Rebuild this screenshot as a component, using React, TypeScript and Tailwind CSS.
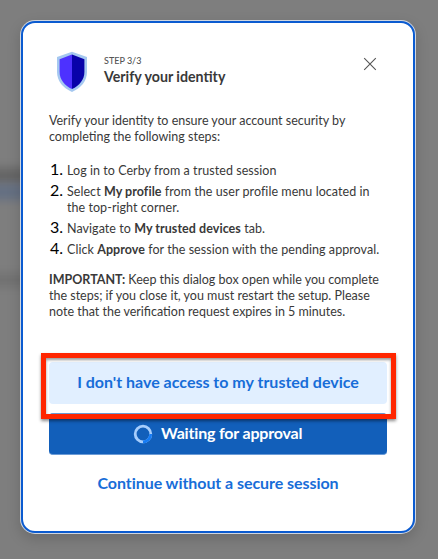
import type { ReactNode } from "react";

function Line({ className = "", children }: { className?: string; children: ReactNode }) {
  return <span className={`block w-max whitespace-nowrap ${className}`}>{children}</span>;
}

function Step({ n, children }: { n: number; children: ReactNode }) {
  return (
    <li className="flex">
      <span className="-mt-0.5 w-[14px] shrink-0 text-right text-[16px] text-black">{n}.</span>
      <div className="ml-1 tracking-[0.055px]">{children}</div>
    </li>
  );
}

function Shield() {
  return (
    <svg width="32" height="42" viewBox="0 0 32 42" className="shrink-0" aria-hidden="true">
      <path d="M16 .8 31 6v15c0 9-6 16-15 20C7 37 1 30 1 21V6Z" fill="#a5c8f0" />
      <path d="M16 3.4 3.6 8.2V21c0 7.7 5 13.6 12.4 17.1Z" fill="#4d31ff" />
      <path d="M16 3.4 28.4 8.2V21c0 7.7-5 13.6-12.4 17.1Z" fill="#0802a9" />
    </svg>
  );
}

function Spinner() {
  return (
    <svg width="20" height="20" viewBox="0 0 20 20" aria-hidden="true">
      <circle cx="10" cy="10" r="7.8" fill="none" stroke="#a6cdfc" strokeWidth="2.8" />
      <path d="M17.8 10A7.8 7.8 0 0 1 10 17.8" fill="none" stroke="#167cf5" strokeWidth="2.8" />
    </svg>
  );
}

export default function App() {
  return (
    <main className="relative flex h-[559px] w-[438px] overflow-hidden bg-[#7e7e7e] pt-5 pl-5 font-['Lato','Liberation_Sans',sans-serif] text-[#393939]">
      <div className="absolute top-[168px] -left-6 h-4 w-16 bg-[#656565] blur-[5px]" />
      <div className="absolute top-[184px] -left-6 h-4 w-16 bg-[#646f83] blur-[5px]" />
      <div className="absolute top-[274px] -left-6 h-3 w-16 bg-[#707070] blur-[5px]" />
      <section className="relative h-[514px] w-[396px] rounded-[15px] bg-[#d0d6df] p-px shadow-[0_5px_14px_rgba(0,0,0,0.16)]">
        <div className="h-full w-full rounded-[14px] border-2 border-[#0b5bd0] bg-white px-[26px] pt-7">
          <header className="flex h-[42px] items-start pl-[7px]">
            <Shield />
            <div className="ml-4 pt-1">
              <Line className="text-[9px] leading-[12px] font-medium text-[#555]">STEP 3/3</Line>
              <Line className="text-[14.2px] leading-[19px] font-bold">Verify your identity</Line>
            </div>
            <svg width="14" height="14" viewBox="0 0 14 14" className="mt-[6px] mr-[10px] ml-auto" aria-label="Close">
              <path d="m1.2 1.2 11.6 11.6M12.8 1.2 1.2 12.8" stroke="#555" strokeWidth="1.1" />
            </svg>
          </header>
          <div className="mt-5 text-[12.5px] leading-4">
            <Line>Verify your identity to ensure your account security by</Line>
            <Line>completing the following steps:</Line>
            <ol className="mt-[18px] flex flex-col gap-[5px]">
              <Step n={1}><Line>Log in to Cerby from a trusted session</Line></Step>
              <Step n={2}>
                <Line>Select <b>My profile</b> from the user profile menu located in</Line>
                <Line>the top-right corner.</Line>
              </Step>
              <Step n={3}><Line>Navigate to <b>My trusted devices</b> tab.</Line></Step>
              <Step n={4}><Line>Click <b>Approve</b> for the session with the pending approval.</Line></Step>
            </ol>
            <div className="mt-[14px]">
              <Line><b>IMPORTANT:</b> Keep this dialog box open while you complete</Line>
              <Line>the steps; if you close it, you must restart the setup. Please</Line>
              <Line>note that the verification request expires in 5 minutes.</Line>
            </div>
          </div>
          <div className="mt-[42px] flex flex-col text-[16px] font-bold">
            <button className="flex h-[42px] w-[338px] items-center justify-center rounded-[4px] bg-[#e1efff] pb-0.5 text-[#176dd8]">
              <Line>I don't have access to my trusted device</Line>
            </button>
            <button className="mt-[9px] flex h-[42px] w-[338px] items-center rounded-[4px] border-y border-[#6b9bd6] bg-[#125fba] pl-[84px] text-white">
              <Spinner />
              <Line className="-mt-0.5 ml-2 tracking-[-0.18px]">Waiting for approval</Line>
            </button>
            <button className="mt-[16px] flex h-6 w-[338px] items-center justify-center text-[#176dd8]">
              <Line className="tracking-[-0.06px]">Continue without a secure session</Line>
            </button>
          </div>
        </div>
      </section>
      <div className="absolute top-[353px] left-[41px] h-[66px] w-[355px] border-[5px] border-[#ff2600] shadow-[0_2px_3px_rgba(0,0,0,0.45),inset_0_2px_3px_rgba(0,0,0,0.4)]" />
    </main>
  );
}
